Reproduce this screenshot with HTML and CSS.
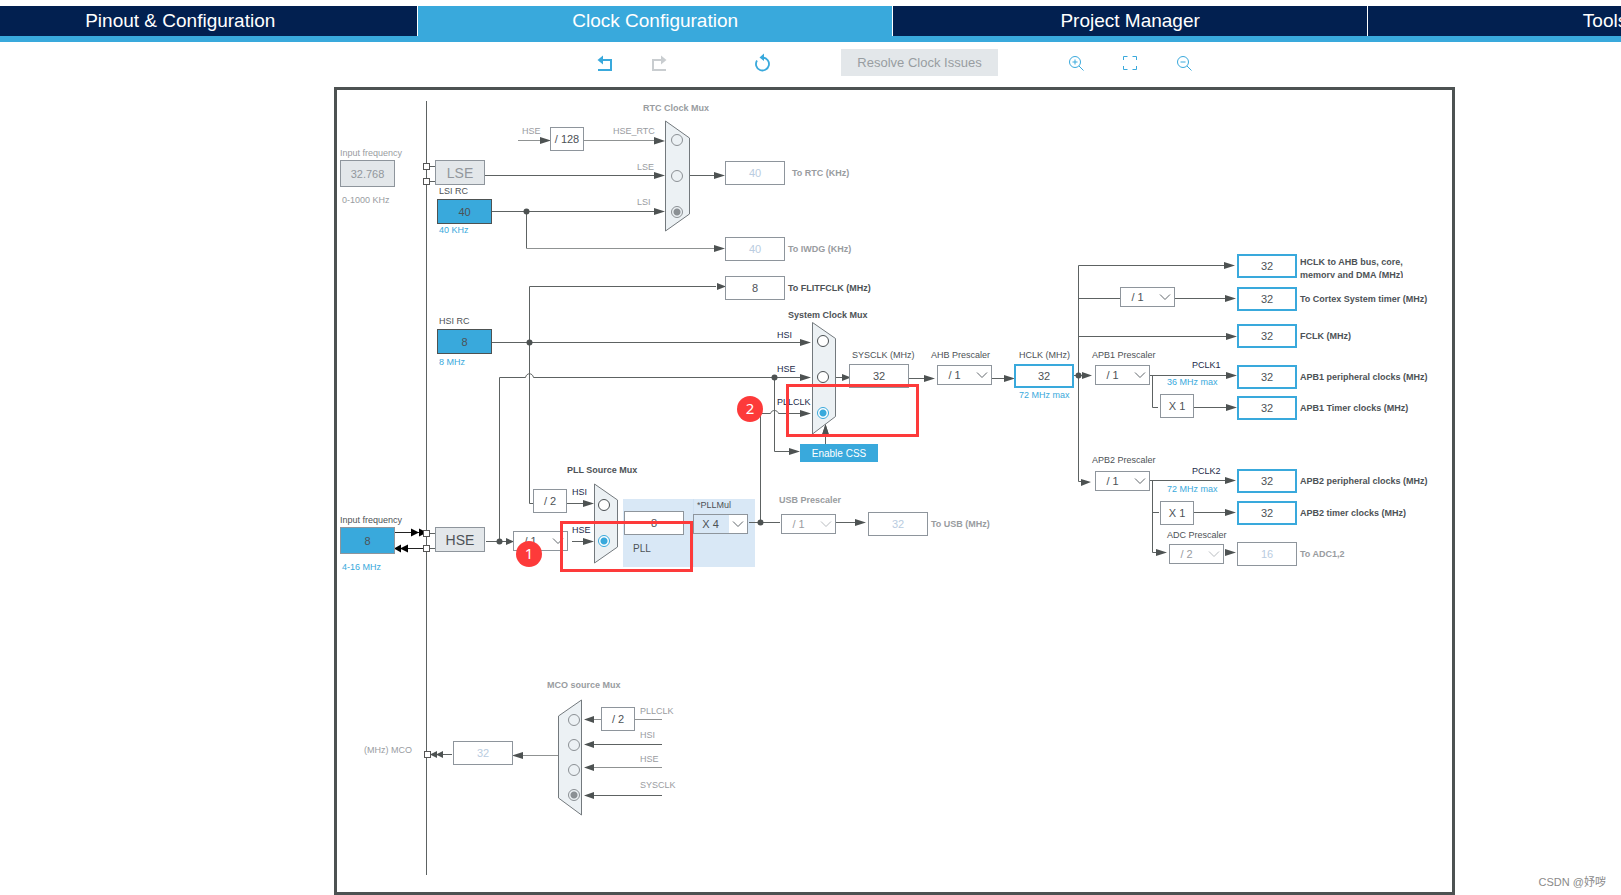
FILE: index.html
```html
<!DOCTYPE html>
<html lang="en">
<head>
<meta charset="utf-8">
<title>Clock Configuration</title>
<link rel="stylesheet" href="styles.css">
</head>
<body>
<nav class="tabs">
  <a class="tab" href="#pinout">Pinout &amp; Configuration</a>
  <a class="tab tab-active" href="#clock">Clock Configuration</a>
  <a class="tab" href="#project">Project Manager</a>
  <a class="tab" href="#tools">Tools</a>
</nav>
<main class="page">
  <div class="toolbar">
    <div class="tool-group">
      <button class="tool" aria-label="Undo"><svg viewBox="0 0 24 24"><path d="M5 19H18V9H7" stroke-width="2"/><path class="solid" d="M4.500 9L10 4.500V13.500Z"/></svg></button>
      <button class="tool" aria-label="Redo" disabled><svg viewBox="0 0 24 24"><path d="M19 19H6V9H17" stroke-width="2"/><path class="solid" d="M19.500 9L14 4.500V13.500Z"/></svg></button>
      <button class="tool tool-reset" aria-label="Reset"><svg viewBox="0 0 24 24"><path d="M6 9.500A6.500 6.500 0 1 0 12 6.500" stroke-width="1.800"/><path class="solid" d="M8.500 6.500L13 2.500V10Z"/></svg></button>
    </div>
    <button class="resolve" disabled>Resolve Clock Issues</button>
    <div class="tool-group">
      <button class="tool" aria-label="Zoom in"><svg viewBox="0 0 24 24"><circle cx="11" cy="11" r="5.500"/><path d="M15 15L19.500 19.500M8.500 11H13.500M11 8.500V13.500"/></svg></button>
      <button class="tool" aria-label="Fit to window"><svg viewBox="0 0 24 24"><path d="M5.500 9V5.500H9.500M14.500 5.500H18.500V9M18.500 15V18.500H14.500M9.500 18.500H5.500V15"/></svg></button>
      <button class="tool" aria-label="Zoom out"><svg viewBox="0 0 24 24"><circle cx="11" cy="11" r="5.500"/><path d="M15 15L19.500 19.500M8.500 11H13.500"/></svg></button>
    </div>
  </div>

  <section class="diagram" aria-label="Clock tree">
    <svg class="wiring" width="1115" height="802" viewBox="337 90 1115 802">
      <rect class="pll-area" x="623" y="499" width="132" height="68"/>
      <path class="pll-split" d="M693.500 499V567"/>

      <g class="wire">
        <path d="M426.500 101V875M429 166.500H435M429 181.500H435"/>
        <path d="M485 175.500H655M492 211.500H655M526.500 211.500V248.500"/>
        <path d="M690 175.500H715"/>
        <path d="M529.500 503.500V286.500H716M492 342.500H801M529.500 503.500H533"/>
        <path d="M499.500 541.500V377.500H525.500C526.500 372.500 532.500 372.500 533.500 377.500H801"/>
        <path d="M774.500 377V451.500H790M760.500 522.500V413.500H770.500C771.500 409.500 777.500 409.500 778.500 413.500H801M825.500 444V434"/>
        <path d="M836 377.500H842M909 378.500H925M992 378.500H1005M1074 375.500H1083"/>
        <path d="M1225 265.500H1078.500V481.500H1083M1078.500 298.500H1120M1175 298.500H1226M1078.500 336.500H1227"/>
        <path d="M1150 375.500H1227M1152.500 375.500V407.500H1158M1194 407.500H1227"/>
        <path d="M1150 480.500H1226M1152.500 480.500V552.500H1157M1152.500 512.500H1159M1194 512.500H1226"/>
        <path d="M486 541.500H507M572 541.500H584M567 503.500H584M749 522.500H780M836 522.500H856"/>
        <path d="M594 744.500H662M594 795.500H662M440 754.500H452"/>
      </g>
      <g class="wire wire-soft">
        <path d="M518 140.500H541M584 140.500H655M526.500 248.500H715M594 719.500H601M635 719.500H662M594 767.500H662M558 755.500H522"/>
      </g>
      <path class="wire-black" d="M395 532.500H423M395 548.500H423"/>
      <path class="wire-black-head" d="M411 528.500V536.500L419 532.500ZM419 528.500V536.500L427 532.500ZM401 544.500V552.500L394 548.500ZM408 544.500V552.500L400 548.500Z"/>

      <g class="head">
        <path d="M540 137V144L551 140.500ZM654 137V144.500L665 141ZM654 172V179L665 175.500ZM654 208V215L665 211.500ZM714 172V179L725 175.500ZM714 245V252L725 248.500ZM717 283V290L726 286.500Z"/>
        <path d="M800 339V346L811 342.500ZM800 374V381L811 377.500ZM800 410V417L811 413.500ZM789 448V455L800 451.500ZM822 435H829L825.500 424ZM842 374V381L851 377.500ZM924 375V382L935 378.500ZM1004 375V382L1015 378.500ZM1082 372V379L1092 375.500Z"/>
        <path d="M1224 262V269L1235 265.500ZM1225 295V302L1236 298.500ZM1226 333V340L1237 336.500ZM1226 372V379L1237 375.500ZM1226 404V411L1237 407.500ZM1225 477V484L1236 480.500ZM1225 509V516L1236 512.500ZM1225 549V556L1236 552.500ZM1081 479V486L1091 482ZM1156 549V556L1167 552.500Z"/>
        <path d="M506 538V545L514 541.500ZM583 538V545L594 541.500ZM583 500V507L594 503.500ZM855 519V526L866 522.500Z"/>
        <path d="M594 716V723L584 719.500ZM594 741V748L584 744.500ZM594 764V771L584 767.500ZM594 792V799L584 795.500ZM523 752V759L512 755.500ZM437 751V758L430 754.500ZM443 751V758L436 754.500Z"/>
        <circle cx="526.500" cy="211.500" r="3"/><circle cx="529.500" cy="342.500" r="3"/><circle cx="774.500" cy="377.500" r="3"/><circle cx="1078.500" cy="375.500" r="3"/><circle cx="499.500" cy="541.500" r="3"/><circle cx="760.500" cy="522.500" r="3"/>
      </g>
      <g class="pin">
        <rect x="423.500" y="163.500" width="6" height="6"/><rect x="423.500" y="178.500" width="6" height="6"/><rect x="423.500" y="530.500" width="6" height="6"/><rect x="423.500" y="545.500" width="6" height="6"/><rect x="424.500" y="751.500" width="6" height="6"/>
      </g>
      <path class="wire" d="M430 533.500H435M430 548.500H435"/>
      <g class="mux">
        <path d="M665.500 121L689.500 138V214L665.500 231Z"/>
        <path d="M812.500 322.500L835.500 338.500V416.500L812.500 434Z"/>
        <path d="M594.500 484L617.500 500V547L594.500 563Z"/>
        <path d="M581.500 700L558.500 716V798L581.500 815Z"/>
      </g>
      <path class="head" d="M822 435H829L825.500 424Z"/>

      <g class="text">
        <text id="l-lsi" x="439" y="194">LSI RC</text>
        <text id="l-hsi" x="439" y="324">HSI RC</text>
        <text id="l-hse-in" x="340" y="523">Input frequency</text>
        <text id="l-sys" x="852" y="358">SYSCLK (MHz)</text>
        <text id="l-ahb" x="931" y="358">AHB Prescaler</text>
        <text id="l-hclk" x="1019" y="358">HCLK (MHz)</text>
        <text id="l-apb1" x="1092" y="358">APB1 Prescaler</text>
        <text id="l-apb2" x="1092" y="463">APB2 Prescaler</text>
        <text id="l-adc" x="1167" y="538">ADC Prescaler</text>
        <text id="l-mul" x="697" y="508">*PLLMul</text>
        <text id="l-pll" class="large" x="633" y="552">PLL</text>
      </g>
      <g class="text text-navy">
        <text id="l-sys-hsi" x="777" y="338">HSI</text>
        <text id="l-sys-hse" x="777" y="372">HSE</text>
        <text id="l-sys-pll" x="777" y="405">PLLCLK</text>
        <text id="l-pll-hsi" x="572" y="495">HSI</text>
        <text id="l-pll-hse" x="572" y="533">HSE</text>
        <text x="1192" y="368">PCLK1</text>
        <text x="1192" y="474">PCLK2</text>
      </g>
      <g class="text text-dim">
        <text id="l-lse-in" x="340" y="156">Input frequency</text>
        <text x="342" y="203">0-1000 KHz</text>
        <text x="522" y="134">HSE</text>
        <text id="l-rtc-hse" x="613" y="134">HSE_RTC</text>
        <text id="l-rtc-lse" x="637" y="170">LSE</text>
        <text id="l-rtc-lsi" x="637" y="205">LSI</text>
        <text id="l-mco" x="364" y="753">(MHz) MCO</text>
        <text id="l-mco-pll" x="640" y="714">PLLCLK</text>
        <text id="l-mco-hsi" x="640" y="738">HSI</text>
        <text id="l-mco-hse" x="640" y="762">HSE</text>
        <text id="l-mco-sys" x="640" y="788">SYSCLK</text>
      </g>
      <g class="text text-blue">
        <text x="439" y="233">40 KHz</text>
        <text x="439" y="365">8 MHz</text>
        <text x="342" y="570">4-16 MHz</text>
        <text x="1019" y="398">72 MHz max</text>
        <text x="1167" y="385">36 MHz max</text>
        <text x="1167" y="492">72 MHz max</text>
      </g>
      <g class="text text-bold">
        <text x="788" y="318">System Clock Mux</text>
        <text x="567" y="473">PLL Source Mux</text>
      </g>
      <g class="text text-dim text-bold">
        <text x="643" y="111">RTC Clock Mux</text>
        <text x="547" y="688">MCO source Mux</text>
        <text id="l-usb" x="779" y="503">USB Prescaler</text>
      </g>
    </svg>

    <input class="node source off at-lse-in" aria-labelledby="l-lse-in" value="32.768" disabled>
    <button class="node osc off at-lse" disabled>LSE</button>
    <input class="node source internal at-lsi" aria-labelledby="l-lsi" value="40" readonly>
    <input class="node source internal at-hsi" aria-labelledby="l-hsi" value="8" readonly>
    <input class="node source at-hse-in" aria-labelledby="l-hse-in" value="8">
    <button class="node osc at-hse">HSE</button>

    <div class="node factor at-rtc-div">/ 128</div>
    <div class="node factor at-pll-div">/ 2</div>
    <div class="node factor at-apb1-mul">X 1</div>
    <div class="node factor at-apb2-mul">X 1</div>
    <div class="node factor at-mco-div">/ 2</div>

    <div class="node choices at-rtc-mux">
      <input type="radio" name="rtc" aria-labelledby="l-rtc-hse" disabled>
      <input type="radio" name="rtc" aria-labelledby="l-rtc-lse" disabled>
      <input type="radio" name="rtc" aria-labelledby="l-rtc-lsi" disabled checked>
    </div>
    <div class="node choices at-sys-mux">
      <input type="radio" name="sys" aria-labelledby="l-sys-hsi">
      <input type="radio" name="sys" aria-labelledby="l-sys-hse">
      <input type="radio" name="sys" aria-labelledby="l-sys-pll" checked>
    </div>
    <div class="node choices at-pll-mux">
      <input type="radio" name="pll" aria-labelledby="l-pll-hsi">
      <input type="radio" name="pll" aria-labelledby="l-pll-hse" checked>
    </div>
    <div class="node choices tight at-mco-mux">
      <input type="radio" name="mco" aria-labelledby="l-mco-pll" disabled>
      <input type="radio" name="mco" aria-labelledby="l-mco-hsi" disabled>
      <input type="radio" name="mco" aria-labelledby="l-mco-hse" disabled>
      <input type="radio" name="mco" aria-labelledby="l-mco-sys" disabled checked>
    </div>

    <button class="node css-button at-css">Enable CSS</button>

    <select class="node divider at-hse-div" aria-label="HSE divider"><option>/ 1</option></select>
    <select class="node divider multiplier at-pll-mul" aria-labelledby="l-mul"><option>X 4</option></select>
    <select class="node divider at-usb-div" aria-labelledby="l-usb" disabled><option>/ 1</option></select>
    <select class="node divider at-ahb" aria-labelledby="l-ahb"><option>/ 1</option></select>
    <select class="node divider at-cortex-div" aria-label="Cortex prescaler"><option>/ 1</option></select>
    <select class="node divider at-apb1" aria-labelledby="l-apb1"><option>/ 1</option></select>
    <select class="node divider at-apb2" aria-labelledby="l-apb2"><option>/ 1</option></select>
    <select class="node divider at-adc-div" aria-labelledby="l-adc" disabled><option>/ 2</option></select>

    <input class="node value at-pll-in" aria-labelledby="l-pll" value="8" readonly>
    <input class="node value at-sysclk" aria-labelledby="l-sys" value="32" readonly>
    <input class="node value editable at-hclk" aria-labelledby="l-hclk" value="32">
    <input class="node value at-mco" aria-labelledby="l-mco" value="32" disabled>

    <div class="node output off spaced at-rtc"><input class="value" id="rtc" value="40" disabled><label for="rtc">To RTC (KHz)</label></div>
    <div class="node output off at-iwdg"><input class="value" id="iwdg" value="40" disabled><label for="iwdg">To IWDG (KHz)</label></div>
    <div class="node output at-flitf"><input class="value" id="flitf" value="8" readonly><label for="flitf">To FLITFCLK (MHz)</label></div>
    <div class="node output off at-usb"><input class="value" id="usb" value="32" disabled><label for="usb">To USB (MHz)</label></div>
    <div class="node output at-ahb-out"><input class="value editable" id="ahb" value="32"><label class="two-line" for="ahb">HCLK to AHB bus, core,<br>memory and DMA (MHz)</label></div>
    <div class="node output at-cortex"><input class="value editable" id="cortex" value="32"><label for="cortex">To Cortex System timer (MHz)</label></div>
    <div class="node output at-fclk"><input class="value editable" id="fclk" value="32"><label for="fclk">FCLK (MHz)</label></div>
    <div class="node output at-apb1-out"><input class="value editable" id="apb1p" value="32"><label for="apb1p">APB1 peripheral clocks (MHz)</label></div>
    <div class="node output at-apb1-timer"><input class="value editable" id="apb1t" value="32"><label for="apb1t">APB1 Timer clocks (MHz)</label></div>
    <div class="node output at-apb2-out"><input class="value editable" id="apb2p" value="32"><label for="apb2p">APB2 peripheral clocks (MHz)</label></div>
    <div class="node output at-apb2-timer"><input class="value editable" id="apb2t" value="32"><label for="apb2t">APB2 timer clocks (MHz)</label></div>
    <div class="node output off at-adc"><input class="value" id="adc" value="16" disabled><label for="adc">To ADC1,2</label></div>

    <div class="node mark at-mark-1"></div>
    <div class="node mark at-mark-2"></div>
    <span class="node badge at-badge-1">1</span>
    <span class="node badge at-badge-2">2</span>
  </section>
</main>
<div class="watermark">CSDN @妤哕</div>
</body>
</html>
```
FILE: styles.css
```css
:root {
  --navy: #022050;
  --blue: #39a9dc;
  --ink: #4d5256;
  --line: #4d5252;
  --edge: #8e959c;
  --dim: #999c9f;
  --pale: #e3e7ea;
  --red: #fd3a3a;
}

* { box-sizing: border-box; }

body {
  margin: 0;
  min-height: 100vh;
  display: flex;
  flex-direction: column;
  background: #fff;
  font-family: "Liberation Sans", Arial, sans-serif;
  color: var(--ink);
  overflow: hidden;
}

button, input, select {
  margin: 0;
  padding: 0;
  font-family: inherit;
  border: 0;
  border-radius: 0;
  appearance: none;
}

/* Tabs */
.tabs {
  display: flex;
  margin-top: 6px;
  border-bottom: 6px solid var(--blue);
  overflow: hidden;
}
.tab {
  flex: 0 0 29.3%;
  height: 30px;
  line-height: 30px;
  border-right: 1px solid #fff;
  background: var(--navy);
  color: #fff;
  font-size: 19px;
  text-align: center;
  text-decoration: none;
}
.tab:first-child { margin-left: -3.5%; }
.tab-active { background: var(--blue); }

/* Toolbar */
.page {
  flex: 1;
  display: flex;
  flex-direction: column;
  padding: 0 166px 0 334px;
}
.toolbar {
  display: flex;
  align-items: center;
  justify-content: center;
  gap: 66px;
  height: 41px;
  margin-bottom: 4px;
}
.tool-group { display: flex; gap: 30px; }
.tool {
  width: 24px;
  height: 24px;
  background: none;
  color: var(--blue);
}
.tool:disabled { color: #c9cdd0; }
.tool svg {
  display: block;
  width: 24px;
  height: 24px;
  fill: none;
  stroke: currentColor;
}
.tool .solid { fill: currentColor; stroke: none; }
.tool-reset { margin-left: 50px; }
.resolve {
  height: 27px;
  padding: 0 16px;
  background: var(--pale);
  color: #989da1;
  font-size: 13px;
}

/* Diagram canvas */
.diagram {
  flex: 1;
  position: relative;
  min-height: 808px;
  border: 3px solid var(--line);
  overflow: hidden;
}
.wiring { display: block; }
.wire { fill: none; stroke: #5d6262; }
.wire-soft { stroke: #8f9292; }
.wire-black { stroke: #222; }
.wire-black-head { fill: #000; }
.head { fill: var(--line); }
.pin { fill: #fff; stroke: #555; }
.mux { fill: #ecf1f4; stroke: #73797d; }
.pll-area { fill: #d9e8f6; }
.pll-split { stroke: #cfe1f2; }
.text { fill: var(--ink); font-size: 9px; }
.text-navy { fill: #1b2a4a; }
.text-dim { fill: var(--dim); }
.text-blue { fill: var(--blue); }
.text-bold { font-weight: bold; }
.large { font-size: 10px; }

.node { position: absolute; }

.source, .value, .divider, .factor {
  color: var(--ink);
  font-size: 11px;
  text-align: center;
}
.source {
  width: 55px;
  height: 27px;
  border: 1px solid var(--edge);
  background: var(--blue);
}
.internal { height: 25px; border-color: var(--line); }
.osc {
  width: 50px;
  height: 25px;
  border: 1px solid var(--edge);
  background: var(--pale);
  color: var(--ink);
  font-size: 14px;
}
.source.off, .osc.off { background: var(--pale); color: #92979d; }

.value {
  width: 60px;
  height: 24px;
  flex: none;
  border: 1px solid var(--edge);
  background: #fff;
}
.value:disabled { color: #b9cce0; }
.editable { border: 2px solid var(--blue); }

.factor {
  width: 34px;
  height: 24px;
  border: 1px solid var(--edge);
  background: #fff;
  line-height: 22px;
}

.divider {
  width: 55px;
  height: 20px;
  padding-right: 20px;
  border: 1px solid var(--edge);
  background: #fff url("data:image/svg+xml,%3Csvg xmlns='http://www.w3.org/2000/svg' width='12' height='8' fill='none' stroke='%2361676c'%3E%3Cpath d='M1 1.500L6 6.500L11 1.500'/%3E%3C/svg%3E") no-repeat right 3px center;
  text-align-last: center;
}
.divider:disabled {
  color: var(--dim);
  opacity: 1;
  background-image: url("data:image/svg+xml,%3Csvg xmlns='http://www.w3.org/2000/svg' width='12' height='8' fill='none' stroke='%23b8bcc0'%3E%3Cpath d='M1 1.500L6 6.500L11 1.500'/%3E%3C/svg%3E");
}
.multiplier { box-shadow: inset 35px 0 #d9e8f6; }

.choices { display: flex; flex-direction: column; gap: 24px; }
.tight { gap: 13px; }
.choices input {
  width: 12px;
  height: 12px;
  border: 1px solid #4a4f52;
  border-radius: 50%;
  background: #fff;
}
.choices input:checked {
  border-color: var(--blue);
  background: radial-gradient(circle, var(--blue) 3px, #fff 4px);
}
.choices input:disabled { border-color: #8b9094; background: #ecf1f4; }
.choices input:disabled:checked { background: radial-gradient(circle, #8b9094 3px, #ecf1f4 4px); }

.css-button {
  width: 78px;
  height: 18px;
  background: var(--blue);
  color: #fff;
  font-size: 10px;
}

.output {
  display: flex;
  align-items: center;
  gap: 3px;
  font-size: 9px;
  font-weight: bold;
  line-height: 13px;
  white-space: nowrap;
}
.output.off { color: var(--dim); }
.spaced { gap: 7px; }
.two-line { align-self: flex-end; height: 22px; overflow: hidden; }

.mark { border: 3px solid var(--red); pointer-events: none; }
.badge {
  width: 26px;
  height: 26px;
  border-radius: 50%;
  background: var(--red);
  color: #fff;
  font-family: "Noto Sans", sans-serif;
  font-size: 15px;
  line-height: 25px;
  text-align: center;
}

/* Places on the canvas */
.at-lse-in { left: 3px; top: 70px; }
.at-lse { left: 98px; top: 70px; }
.at-lsi { left: 100px; top: 109px; }
.at-hsi { left: 100px; top: 239px; }
.at-hse-in { left: 3px; top: 437px; }
.at-hse { left: 98px; top: 437px; }
.at-rtc-div { left: 213px; top: 37px; }
.at-pll-div { left: 196px; top: 399px; }
.at-apb1-mul { left: 823px; top: 304px; }
.at-apb2-mul { left: 823px; top: 411px; }
.at-mco-div { left: 264px; top: 617px; }
.at-rtc-mux { left: 334px; top: 44px; }
.at-sys-mux { left: 480px; top: 245px; }
.at-pll-mux { left: 261px; top: 409px; }
.at-mco-mux { left: 231px; top: 624px; }
.at-css { left: 463px; top: 354px; }
.at-hse-div { left: 176px; top: 441px; }
.at-pll-mul { left: 356px; top: 424px; }
.at-usb-div { left: 444px; top: 424px; }
.at-ahb { left: 600px; top: 275px; }
.at-cortex-div { left: 783px; top: 197px; }
.at-apb1 { left: 758px; top: 275px; }
.at-apb2 { left: 758px; top: 381px; }
.at-adc-div { left: 832px; top: 454px; }
.at-pll-in { left: 287px; top: 421px; }
.at-sysclk { left: 512px; top: 274px; }
.at-hclk { left: 677px; top: 274px; }
.at-mco { left: 116px; top: 651px; }
.at-rtc { left: 388px; top: 71px; }
.at-iwdg { left: 388px; top: 147px; }
.at-flitf { left: 388px; top: 186px; }
.at-usb { left: 531px; top: 422px; }
.at-ahb-out { left: 900px; top: 164px; }
.at-cortex { left: 900px; top: 197px; }
.at-fclk { left: 900px; top: 234px; }
.at-apb1-out { left: 900px; top: 275px; }
.at-apb1-timer { left: 900px; top: 306px; }
.at-apb2-out { left: 900px; top: 379px; }
.at-apb2-timer { left: 900px; top: 411px; }
.at-adc { left: 900px; top: 452px; }
.at-mark-1 { left: 223px; top: 431px; width: 133px; height: 51px; }
.at-mark-2 { left: 449px; top: 294px; width: 133px; height: 53px; }
.at-badge-1 { left: 179px; top: 451px; }
.at-badge-2 { left: 400px; top: 306px; }

.watermark {
  position: absolute;
  right: 15px;
  bottom: 6px;
  color: #8a8a8a;
  font-family: "Liberation Sans", "Noto Sans CJK SC", sans-serif;
  font-size: 11px;
}
```
